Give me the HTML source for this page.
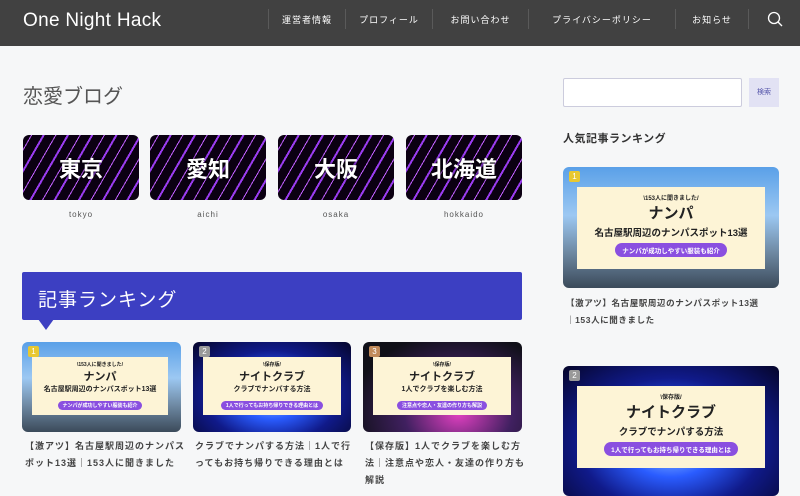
<!DOCTYPE html>
<html><head><meta charset="utf-8"><style>
*{margin:0;padding:0;box-sizing:border-box}
body{width:800px;height:486px;overflow:hidden;background:#f6f7f8;font-family:"Liberation Sans","Noto Sans CJK JP",sans-serif;color:#333;position:relative}
.hd{position:absolute;left:0;top:0;width:800px;height:46px;background:#414141}
.logo{position:absolute;left:23px;top:10px;font-size:19px;color:#fff;letter-spacing:.3px}
.nav{position:absolute;display:flex;align-items:center;justify-content:center;font-size:9px;color:#fff;letter-spacing:1px;border-left:1px solid #5a5a5a;top:9px;height:20px}
.a{position:absolute}
.cat{position:absolute;top:135px;width:116px;height:65px;border-radius:6px;background:repeating-linear-gradient(-60deg,#0b0012 0 9px,#9a3cf0 9px 11px,#0b0012 11px 20px,#c060ff 20px 21px),#150020;display:flex;align-items:center;justify-content:center;color:#fff;font-weight:bold;font-size:22px;text-shadow:0 0 3px #000}
.cl{position:absolute;top:210px;width:116px;text-align:center;font-size:8px;color:#555;letter-spacing:1px}
.rc{position:absolute;border-radius:6px;overflow:hidden}
.box{position:absolute;background:#fdf4d6;text-align:center;color:#222;font-weight:bold}
.pill{display:inline-block;background:#8a4fe0;color:#fff;border-radius:8px}
.num{position:absolute;left:6px;top:4px;width:11px;height:11px;border-radius:2px;font-size:8px;color:#fff;text-align:center;line-height:11px}
.tt{position:absolute;font-size:9px;line-height:17px;color:#444;font-weight:bold;letter-spacing:1px}
.city{background:linear-gradient(180deg,#5aa0e8 0%,#9cc8f2 40%,#6f8aa4 70%,#3b4a5a 100%)}
.club{background:radial-gradient(ellipse at 50% 60%,#a8d8ff 0%,#2a5cff 30%,#101a8a 60%,#05052a 100%)}
.club2{background:radial-gradient(ellipse at 60% 80%,#e040c0 0%,#402060 40%,#101018 80%)}
</style></head><body>
<div class="hd">
<div class="logo">One Night Hack</div>
<div class="nav" style="left:268px;width:77px">運営者情報</div>
<div class="nav" style="left:345px;width:87px">プロフィール</div>
<div class="nav" style="left:432px;width:96px">お問い合わせ</div>
<div class="nav" style="left:528px;width:147px">プライバシーポリシー</div>
<div class="nav" style="left:675px;width:73px">お知らせ</div>
<div class="nav" style="left:748px;width:52px"><svg width="16" height="16" viewBox="0 0 16 16"><circle cx="7" cy="7" r="5.5" fill="none" stroke="#fff" stroke-width="1.3"/><path d="M11 11l4 4" stroke="#fff" stroke-width="1.3"/></svg></div>
</div>
<div class="a" style="left:23px;top:80px;font-size:20px;color:#555">恋愛ブログ</div>
<div class="cat" style="left:23px">東京</div><div class="cl" style="left:23px">tokyo</div>
<div class="cat" style="left:150px">愛知</div><div class="cl" style="left:150px">aichi</div>
<div class="cat" style="left:278px">大阪</div><div class="cl" style="left:278px">osaka</div>
<div class="cat" style="left:406px">北海道</div><div class="cl" style="left:406px">hokkaido</div>
<div class="a" style="left:22px;top:272px;width:500px;height:48px;background:#3c3fc2;border-radius:2px;color:#fff;font-size:19px;padding:13px 0 0 16px;letter-spacing:1px">記事ランキング</div>
<div class="a" style="left:38px;top:319px;width:0;height:0;border-left:8px solid transparent;border-right:8px solid transparent;border-top:11px solid #3c3fc2"></div>

<div class="rc city" style="left:22px;top:342px;width:159px;height:90px"><div class="num" style="background:#e8c830">1</div>
<div class="box" style="left:10px;top:15px;width:136px;height:58px"><div style="font-size:5px;margin-top:4px">\153人に聞きました/</div><div style="font-size:11px">ナンパ</div><div style="font-size:7px">名古屋駅周辺のナンパスポット13選</div><div class="pill" style="font-size:5px;padding:1px 5px;margin-top:2px">ナンパが成功しやすい服装も紹介</div></div></div>
<div class="rc club" style="left:193px;top:342px;width:158px;height:90px"><div class="num" style="background:#999">2</div>
<div class="box" style="left:10px;top:15px;width:138px;height:58px"><div style="font-size:5px;margin-top:4px">\保存版/</div><div style="font-size:11px">ナイトクラブ</div><div style="font-size:7px">クラブでナンパする方法</div><div class="pill" style="font-size:5px;padding:1px 5px;margin-top:3px">1人で行ってもお持ち帰りできる理由とは</div></div></div>
<div class="rc club2" style="left:363px;top:342px;width:159px;height:90px"><div class="num" style="background:#c08a5a">3</div>
<div class="box" style="left:10px;top:15px;width:138px;height:58px"><div style="font-size:5px;margin-top:4px">\保存版/</div><div style="font-size:11px">ナイトクラブ</div><div style="font-size:7px">1人でクラブを楽しむ方法</div><div class="pill" style="font-size:5px;padding:1px 5px;margin-top:3px">注意点や恋人・友達の作り方も解説</div></div></div>
<div class="tt" style="left:25px;top:438px;width:160px">【激アツ】名古屋駅周辺のナンパスポット13選｜153人に聞きました</div>
<div class="tt" style="left:195px;top:438px;width:160px">クラブでナンパする方法｜1人で行ってもお持ち帰りできる理由とは</div>
<div class="tt" style="left:365px;top:438px;width:162px">【保存版】1人でクラブを楽しむ方法｜注意点や恋人・友達の作り方も解説</div>

<div class="a" style="left:563px;top:78px;width:179px;height:29px;background:#fff;border:1px solid #ccd;border-radius:2px"></div>
<div class="a" style="left:749px;top:78px;width:30px;height:29px;background:#e2e2f4;font-size:7px;color:#55a;text-align:center;line-height:29px">検索</div>
<div class="a" style="left:563px;top:130px;font-size:11px;font-weight:bold;color:#333;letter-spacing:.5px">人気記事ランキング</div>
<div class="rc city" style="left:563px;top:167px;width:216px;height:121px"><div class="num" style="background:#e8c830">1</div>
<div class="box" style="left:14px;top:20px;width:188px;height:82px"><div style="font-size:6px;margin-top:6px">\153人に聞きました/</div><div style="font-size:15px">ナンパ</div><div style="font-size:9.5px;margin-top:2px">名古屋駅周辺のナンパスポット13選</div><div class="pill" style="font-size:6.5px;padding:2px 7px;margin-top:4px">ナンパが成功しやすい服装も紹介</div></div></div>
<div class="tt" style="left:566px;top:295px;width:212px;font-size:8.5px;line-height:17px;letter-spacing:.6px">【激アツ】名古屋駅周辺のナンパスポット13選<br>｜153人に聞きました</div>
<div class="rc club" style="left:563px;top:366px;width:216px;height:130px"><div class="num" style="background:#999">2</div>
<div class="box" style="left:14px;top:20px;width:188px;height:82px"><div style="font-size:6px;margin-top:6px">\保存版/</div><div style="font-size:15px">ナイトクラブ</div><div style="font-size:9.5px;margin-top:2px">クラブでナンパする方法</div><div class="pill" style="font-size:6.5px;padding:2px 7px;margin-top:4px">1人で行ってもお持ち帰りできる理由とは</div></div></div>
</body></html>
